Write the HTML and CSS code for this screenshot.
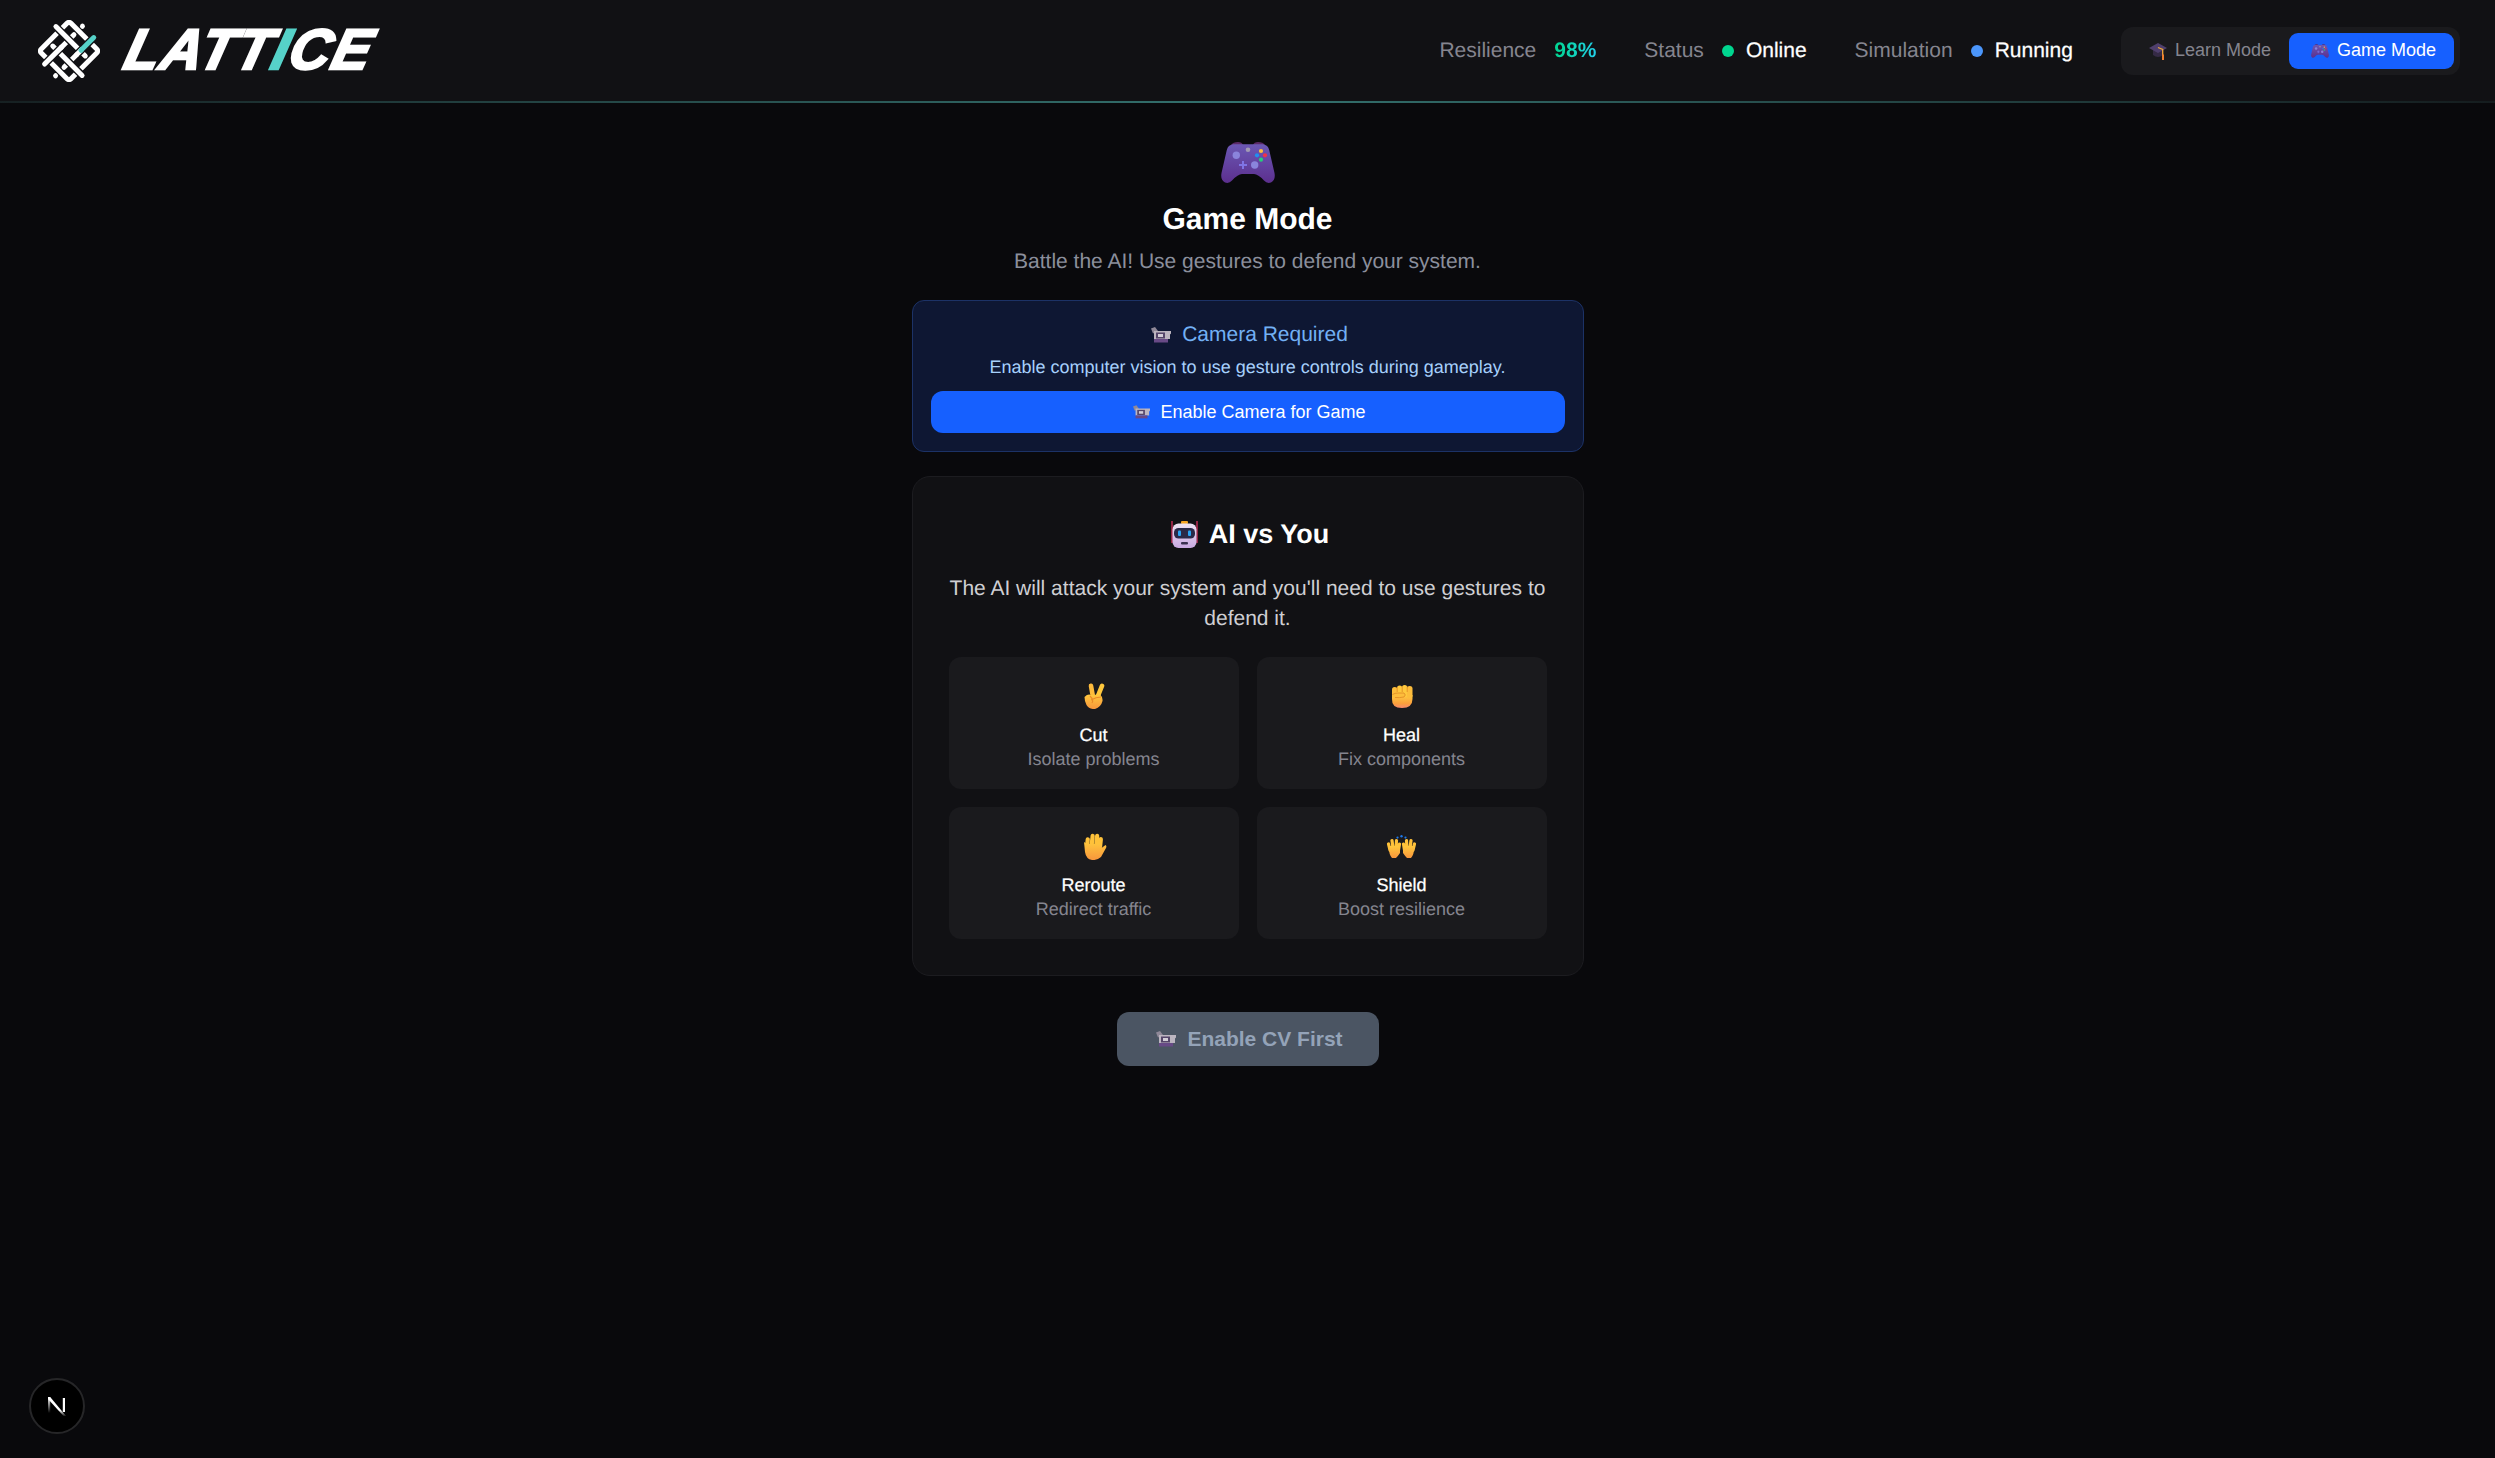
FILE: index.html
```html
<!DOCTYPE html>
<html lang="en">
<head>
<meta charset="utf-8">
<title>Lattice</title>
<link rel="stylesheet" href="styles.css">
</head>
<body>
<svg class="sprite" xmlns="http://www.w3.org/2000/svg" aria-hidden="true">
  <defs>
    <linearGradient id="padGrad" x1="0" y1="0" x2="0" y2="1"><stop offset="0" stop-color="#6b58b4"/><stop offset="1" stop-color="#5c2f8e"/></linearGradient>
    <linearGradient id="skin" x1="0" y1="0" x2="0" y2="1"><stop offset="0" stop-color="#ffc83d"/><stop offset="1" stop-color="#f8963c"/></linearGradient>
    <linearGradient id="fistGrad" x1="0" y1="0" x2="0" y2="1"><stop offset="0" stop-color="#ffcb40"/><stop offset=".65" stop-color="#fba03c"/><stop offset="1" stop-color="#f98a6e"/></linearGradient>
    <linearGradient id="botGrad" x1="0" y1="0" x2="0" y2="1"><stop offset="0" stop-color="#efe4f4"/><stop offset="1" stop-color="#c8a8e0"/></linearGradient>
    <symbol id="e-game" viewBox="0 0 54 41">
      <path d="M10 3 Q12 0 17 0 Q21 0 22 3Z M32 3 Q33 0 37 0 Q42 0 44 3Z" fill="#5b2a68"/>
      <path d="M12 2.200 H42 Q47 3 48.200 8 L53.500 31 Q54.800 38 50 40.500 Q46 42 43 38.500 Q37 32 33 32 H21 Q17 32 11 38.500 Q8 42 4 40.500 Q-.8 38 .5 31 L5.800 8 Q7 3 12 2.200Z" fill="url(#padGrad)"/>
      <circle cx="15.300" cy="13.300" r="3.700" fill="#8a84dc"/>
      <circle cx="27" cy="7.700" r="2.300" fill="#a29bb4"/>
      <circle cx="40" cy="9" r="2.100" fill="#fbbf3c"/>
      <circle cx="36" cy="13.300" r="2.100" fill="#1f8ff0"/>
      <circle cx="44" cy="13.300" r="2.100" fill="#f0304a"/>
      <circle cx="40" cy="17.700" r="2.100" fill="#24d07a"/>
      <path d="M22 19 V27 M18 23 H26" stroke="#7f74e4" stroke-width="2" fill="none"/>
      <circle cx="33.700" cy="23" r="3.700" fill="#8a84dc"/>
    </symbol>
    <symbol id="e-cap" viewBox="0 0 18 18">
      <path d="M4 8 V13 Q9 17 14 13 V8Z" fill="#352a45"/>
      <path d="M9 1 L18 6 L9 11 L0 6Z" fill="#4f3f6c"/>
      <path d="M9 5.500 L13.700 7.500 V13" stroke="#f2a838" stroke-width="1.300" fill="none"/>
      <path d="M13 12.500 H15 V18 H13Z" fill="#ee7f30"/>
    </symbol>
    <symbol id="e-cam" viewBox="0 0 20 16">
      <path d="M0 1.500 L4 0 L7 4 L2 6.500Z" fill="#8f8898"/>
      <path d="M3 4 H20 V6.500 L19 7.500 V12 H3Z" fill="#bcb5c0"/>
      <rect x="5" y="5.500" width="9" height="6" fill="#55466a"/>
      <rect x="7" y="7" width="5" height="3" fill="#d2ccd7"/>
      <rect x="3" y="12" width="14" height="3.500" fill="#684a86"/>
    </symbol>
    <symbol id="e-robot" viewBox="0 0 27 27">
      <rect x="10" y="0" width="7" height="3" rx="1" fill="#f5a524"/>
      <path d="M1 0 V22 M26 0 V22" stroke="#d8315f" stroke-width="1.300"/>
      <rect x="1.500" y="2.500" width="24" height="24.500" rx="6" fill="url(#botGrad)"/>
      <rect x="3" y="7" width="21" height="10.500" rx="4.500" fill="#2a2a48"/>
      <rect x="7" y="9.500" width="3" height="5.500" rx="1" fill="#2aa4f4"/>
      <rect x="17" y="9.500" width="3" height="5.500" rx="1" fill="#2aa4f4"/>
      <rect x="10" y="21" width="7" height="2.500" rx="1" fill="#3a3050"/>
    </symbol>
    <symbol id="e-victory" viewBox="0 0 22 26">
      <path d="M10 14 L8 2.800" stroke="#fdbb3c" stroke-width="4.600" stroke-linecap="round"/>
      <path d="M14.500 14 L19 2.800" stroke="#ffc83d" stroke-width="4.600" stroke-linecap="round"/>
      <path d="M1.500 14 Q5 10.500 8 12 L17 11.500 Q20 14 19.500 18 Q18 24 12 26 Q6 26.500 3.500 22 Q1.500 18 1.500 14Z" fill="url(#skin)"/>
      <path d="M7 13 Q11 17 9 20 M8 17 Q13 14 18 14" stroke="#e98a28" stroke-width="1.200" fill="none"/>
    </symbol>
    <symbol id="e-fist" viewBox="0 0 22 23">
      <path d="M1 10 H21.500 V14 Q21.500 23 11 23 Q.5 23 1 14Z" fill="url(#fistGrad)"/>
      <rect x="1" y="2" width="5.300" height="11" rx="2.600" fill="#fdbd3c"/>
      <rect x="6" y=".5" width="5.300" height="12" rx="2.600" fill="#ffc83d"/>
      <rect x="11" y="0" width="5.300" height="12" rx="2.600" fill="#ffc83d"/>
      <rect x="16" y="1" width="5.500" height="12" rx="2.600" fill="#fdbd3c"/>
      <path d="M6.200 2 V7 M11.200 1.500 V7 M16.200 1.500 V7" stroke="#e59428" stroke-width="1"/>
      <path d="M1.500 9.500 Q4 8 7 8 H13 Q15.500 10 13 12 Q8 13 4 12.500" stroke="#e59428" stroke-width="1" fill="#fdbd3c"/>
    </symbol>
    <symbol id="e-hand" viewBox="0 0 26 27">
      <path d="M6 14 V7 M10.500 12 V3 M15 12 V2.500 M19 13 V5.500" stroke="#ffc23a" stroke-width="4.200" stroke-linecap="round" transform="rotate(6 13 14)"/>
      <path d="M3 9 L6 11 H20 L20.500 15 L24.500 12 Q26 13 25 15 L20 24 Q16 27.500 11 27 Q5 26 4 19Z" fill="url(#skin)"/>
    </symbol>
    <symbol id="e-hands" viewBox="0 0 29 23">
      <path d="M3 15 L1.500 9 M6 13 L5 5.500 M9 13 L9.500 5.500 M11.500 15 L12.500 9 M17.500 15 L16.500 9 M20 13 L19.500 5.500 M23 13 L24 5.500 M26 15 L27.500 9" stroke="#ffc23a" stroke-width="3.200" stroke-linecap="round"/>
      <path d="M1.500 11 H11.500 L13 15 V18 Q11 21 9 23 H5 Q2 20 1.500 11Z M17.500 11 H27.500 Q27 20 24 23 H20 Q18 21 16 18 V15Z" fill="url(#skin)"/>
      <circle cx="14.500" cy="1.200" r="1.200" fill="#1f78e8"/>
      <circle cx="10.500" cy="2.600" r="1.100" fill="#1f78e8"/>
      <circle cx="18.500" cy="2.600" r="1.100" fill="#1f78e8"/>
    </symbol>
  </defs>
</svg>

<header class="topbar">
  <div class="brand">
    <svg class="brand-mark" viewBox="0 0 62 62" xmlns="http://www.w3.org/2000/svg" aria-hidden="true">
      <g transform="translate(31 31) rotate(45)" fill="none" stroke-linecap="round">
        <path d="M-8 -15 V14 M8 -3 V15" stroke="#fff" stroke-width="5"/>
        <circle cx="-8" cy="-27" r="2.500" fill="#fff"/>
        <circle cx="8" cy="27" r="2.500" fill="#fff"/>
        <rect x="-21" y="-21" width="42" height="42" rx="2.500" stroke="#fff" stroke-width="5"/>
        <path d="M-26 -8 H14 M-14 8 H26" stroke="#111114" stroke-width="7.600" stroke-linecap="butt"/>
        <path d="M-26.500 -8 H15 M-15 8 H26.500" stroke="#fff" stroke-width="5"/>
        <path d="M-8 3.800 V26 M8 -3.800 V-26" stroke="#111114" stroke-width="7.600" stroke-linecap="butt"/>
        <path d="M-8 2.500 V26.500" stroke="#fff" stroke-width="5"/>
        <path d="M8 -3 V-10" stroke="#fff" stroke-width="5"/>
        <path d="M8 -9 V-27" stroke="#56d2c9" stroke-width="5"/>
      </g>
    </svg>
    <span class="brand-name">LATT<span class="brand-accent">I</span>CE</span>
  </div>
  <div class="topbar-right">
    <div class="stat"><span class="stat-label">Resilience</span><span class="stat-score">98%</span></div>
    <div class="stat"><span class="stat-label">Status</span><span class="stat-value"><i class="dot dot-green"></i>Online</span></div>
    <div class="stat"><span class="stat-label">Simulation</span><span class="stat-value"><i class="dot dot-blue"></i>Running</span></div>
    <div class="mode-toggle">
      <button class="mode-btn"><svg class="mode-emoji"><use href="#e-cap"/></svg>Learn Mode</button>
      <button class="mode-btn mode-btn-active"><svg class="mode-emoji"><use href="#e-game"/></svg>Game Mode</button>
    </div>
  </div>
</header>

<main class="page">
  <div class="hero">
    <svg class="hero-emoji"><use href="#e-game"/></svg>
    <h1 class="hero-title">Game Mode</h1>
    <p class="hero-sub">Battle the AI! Use gestures to defend your system.</p>
  </div>

  <section class="camera-card">
    <h3 class="camera-title"><svg class="emoji-cam"><use href="#e-cam"/></svg>Camera Required</h3>
    <p class="camera-text">Enable computer vision to use gesture controls during gameplay.</p>
    <button class="camera-btn"><svg class="emoji-cam-sm"><use href="#e-cam"/></svg>Enable Camera for Game</button>
  </section>

  <section class="battle-card">
    <h2 class="battle-title"><svg class="emoji-robot"><use href="#e-robot"/></svg>AI vs You</h2>
    <p class="battle-text">The AI will attack your system and you'll need to use gestures to defend it.</p>
    <div class="gesture-grid">
      <div class="gesture">
        <div class="gesture-icon"><svg class="g-victory"><use href="#e-victory"/></svg></div>
        <div class="gesture-name">Cut</div>
        <div class="gesture-desc">Isolate problems</div>
      </div>
      <div class="gesture">
        <div class="gesture-icon"><svg class="g-fist"><use href="#e-fist"/></svg></div>
        <div class="gesture-name">Heal</div>
        <div class="gesture-desc">Fix components</div>
      </div>
      <div class="gesture">
        <div class="gesture-icon"><svg class="g-hand"><use href="#e-hand"/></svg></div>
        <div class="gesture-name">Reroute</div>
        <div class="gesture-desc">Redirect traffic</div>
      </div>
      <div class="gesture">
        <div class="gesture-icon"><svg class="g-hands"><use href="#e-hands"/></svg></div>
        <div class="gesture-name">Shield</div>
        <div class="gesture-desc">Boost resilience</div>
      </div>
    </div>
  </section>

  <button class="start-btn" disabled><svg class="emoji-cam"><use href="#e-cam"/></svg>Enable CV First</button>
</main>

<div class="next-badge">
  <svg class="next-n" viewBox="0 0 20 22" xmlns="http://www.w3.org/2000/svg" aria-hidden="true">
    <defs>
      <linearGradient id="nFade" x1="0" y1="0" x2="0" y2="1"><stop offset="0" stop-color="#fff"/><stop offset=".7" stop-color="#fff"/><stop offset="1" stop-color="#fff" stop-opacity=".1"/></linearGradient>
      <linearGradient id="nFade2" x1="0" y1="0" x2="0" y2="1"><stop offset="0" stop-color="#fff"/><stop offset="1" stop-color="#fff" stop-opacity="0"/></linearGradient>
    </defs>
    <path d="M1 2 H3.200 L19 21 H16.500 L1 4Z" fill="url(#nFade)"/>
    <rect x="1" y="2" width="2.200" height="16" fill="url(#nFade2)"/>
    <rect x="15.800" y="3" width="2.200" height="14" fill="#fff"/>
  </svg>
</div>
</body>
</html>
```

FILE: styles.css
```css
* { box-sizing: border-box; }

html, body {
  margin: 0;
  padding: 0;
  min-height: 100%;
}

body {
  background: #09090c;
  color: #fff;
  font-family: "Liberation Sans", Arial, sans-serif;
  text-rendering: geometricPrecision;
  min-height: 1458px;
}

h1, h2, h3, p { margin: 0; }
button { font-family: inherit; border: 0; cursor: pointer; }

.sprite { display: block; width: 0; height: 0; overflow: hidden; }

/* Top bar */
.topbar {
  height: 103px;
  padding: 0 35px 0 38px;
  display: flex;
  align-items: center;
  justify-content: space-between;
  background: #111114;
  border-bottom: 2px solid;
  border-image: linear-gradient(90deg, rgba(86,210,201,.08), rgba(86,210,201,.5) 50%, rgba(86,210,201,.06)) 1;
}

.brand { display: flex; align-items: center; gap: 26px; }
.brand-mark { width: 62px; height: 62px; display: block; }
.brand-name {
  display: block;
  font-size: 57px;
  line-height: 57px;
  font-weight: 700;
  font-style: italic;
  letter-spacing: 1.500px;
  -webkit-text-stroke: 2.500px #fff;
  color: #fff;
  transform: skewX(-14deg);
}
.brand-accent { color: #56d2c9; -webkit-text-stroke-color: #56d2c9; }

.topbar-right { display: flex; align-items: center; gap: 48px; }
.stat { display: flex; align-items: center; gap: 18px; font-size: 21px; line-height: 30px; }
.stat-label { color: #85858f; }
.stat-score {
  font-weight: 700;
  background: linear-gradient(90deg, #00d68f, #22cfe8);
  -webkit-background-clip: text;
  background-clip: text;
  color: transparent;
}
.stat-value { display: flex; align-items: center; gap: 12px; color: #fff; -webkit-text-stroke: .25px #fff; }
.dot { display: block; width: 12px; height: 12px; border-radius: 50%; }
.dot-green { background: #00d68f; }
.dot-blue { background: #4b96fb; }

.mode-toggle {
  display: flex;
  padding: 6px;
  background: #1a1a1d;
  border-radius: 12px;
}
.mode-btn {
  display: flex;
  align-items: center;
  height: 36px;
  padding: 0 18px;
  background: transparent;
  color: #85858f;
  font-size: 18px;
  border-radius: 9px;
}
.mode-btn-active { background: #1660ff; color: #fff; }
.mode-emoji { width: 18px; height: 18px; margin: 0 8px 0 4px; }

/* Page */
.page {
  width: 672px;
  margin: 0 auto;
  padding-top: 30px;
  display: flex;
  flex-direction: column;
  align-items: stretch;
}

.hero { text-align: center; margin-bottom: 23px; }
.hero-emoji { display: block; width: 54px; height: 41px; margin: 9px auto 16px; }
.hero-title { font-size: 30px; line-height: 42px; font-weight: 700; margin-bottom: 6px; }
.hero-sub { font-size: 21px; line-height: 30px; color: #8b8f9c; }

.camera-card {
  padding: 18px;
  background: #0e1733;
  border: 1px solid #1c3266;
  border-radius: 12px;
  text-align: center;
  margin-bottom: 24px;
}
.camera-title {
  display: flex;
  align-items: center;
  justify-content: center;
  font-size: 21px;
  line-height: 32px;
  font-weight: 400;
  color: #72b0f4;
  margin-bottom: 4px;
}
.emoji-cam { width: 20px; height: 16px; margin: 0 11px 0 4px; }
.camera-text { font-size: 18px; line-height: 24px; color: #a6d0fc; margin-bottom: 12px; }
.camera-btn {
  display: flex;
  align-items: center;
  justify-content: center;
  width: 100%;
  height: 42px;
  background: #1660ff;
  color: #fff;
  font-size: 18px;
  border-radius: 12px;
}
.emoji-cam-sm { width: 17px; height: 14px; margin: 0 10px 0 4px; }

.battle-card {
  padding: 36px;
  background: #111114;
  border: 1px solid #1c1c20;
  border-radius: 18px;
  text-align: center;
  margin-bottom: 36px;
}
.battle-title {
  display: flex;
  align-items: center;
  justify-content: center;
  font-size: 27px;
  line-height: 42px;
  font-weight: 700;
  margin-bottom: 19px;
}
.emoji-robot { width: 27px; height: 27px; margin: 0 11px 0 5px; }
.battle-text { font-size: 21px; line-height: 30px; color: #cfcfd3; margin-bottom: 23px; }

.gesture-grid { display: grid; grid-template-columns: 1fr 1fr; gap: 18px; }
.gesture { padding: 18px; background: #1a1a1d; border-radius: 12px; }
.gesture-icon {
  display: flex;
  align-items: center;
  justify-content: center;
  height: 42px;
  margin-bottom: 6px;
}
.gesture-name { font-size: 18px; line-height: 24px; color: #fff; -webkit-text-stroke: .25px #fff; }
.gesture-desc { font-size: 18px; line-height: 24px; color: #85858f; }
.g-victory { width: 22px; height: 26px; }
.g-fist { width: 22px; height: 23px; }
.g-hand { width: 26px; height: 27px; }
.g-hands { width: 29px; height: 23px; }

.start-btn {
  display: flex;
  align-items: center;
  justify-content: center;
  align-self: center;
  width: 262px;
  height: 54px;
  background: #4b5563;
  color: #94a3b8;
  font-size: 21px;
  font-weight: 700;
  border-radius: 12px;
}

/* Dev badge */
.next-badge {
  position: fixed;
  left: 29px;
  bottom: 24px;
  width: 56px;
  height: 56px;
  display: flex;
  align-items: center;
  justify-content: center;
  background: #000;
  border: 2px solid #262628;
  border-radius: 50%;
}
.next-n { width: 20px; height: 22px; }
```
